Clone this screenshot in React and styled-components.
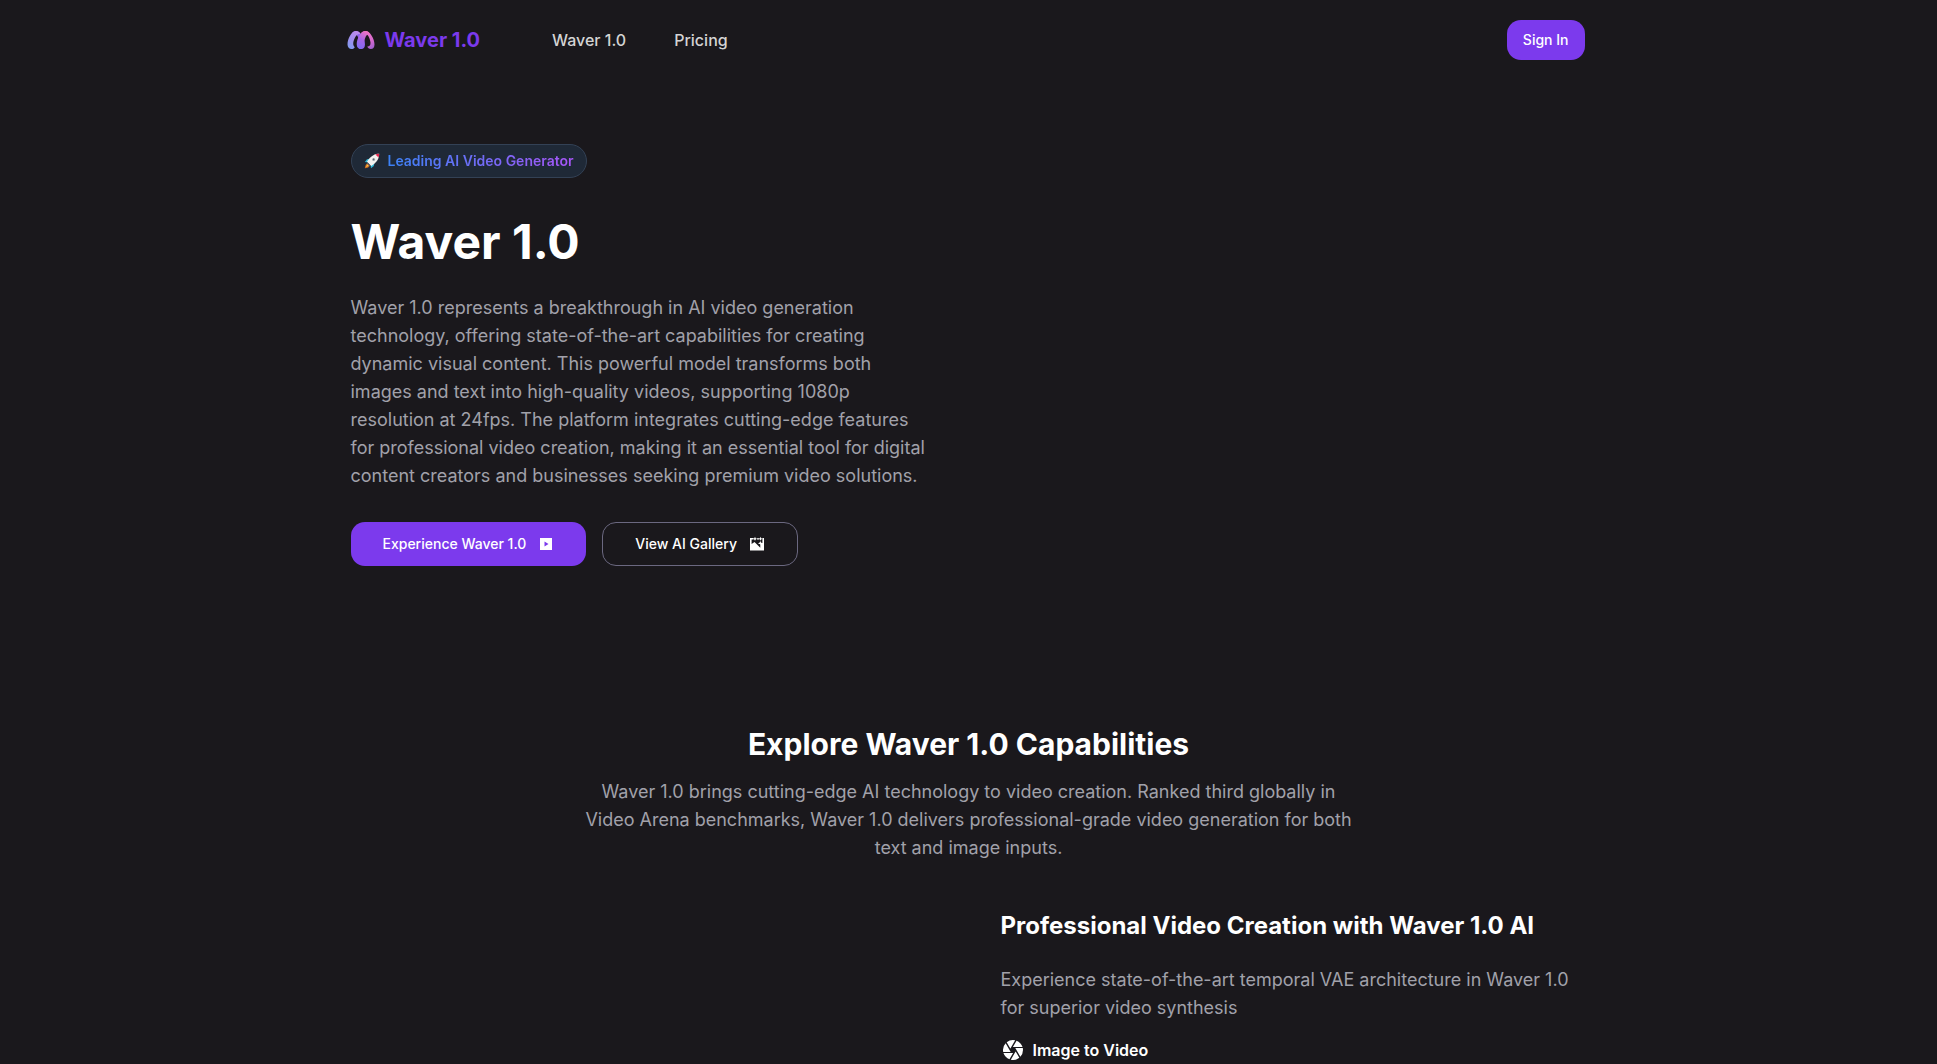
import React from 'react';
import styled, { createGlobalStyle } from 'styled-components';
import { MdCamera } from 'react-icons/md';

const NAV_LINKS = ['Waver 1.0', 'Pricing'];

const LogoIcon = () => (
	<svg width="28" height="20" viewBox="0 0 28 20" fill="none" aria-hidden="true">
		<defs>
			<linearGradient id="logoLeft" x1="1" y1="18" x2="14" y2="2" gradientUnits="userSpaceOnUse">
				<stop stopColor="#7f9cf0" />
				<stop offset="0.5" stopColor="#a48cec" />
				<stop offset="1" stopColor="#c48be8" />
			</linearGradient>
			<linearGradient id="logoMid" x1="10" y1="18" x2="19" y2="2" gradientUnits="userSpaceOnUse">
				<stop stopColor="#7c6cf2" />
				<stop offset="0.5" stopColor="#a464e6" />
				<stop offset="1" stopColor="#ee72c4" />
			</linearGradient>
			<linearGradient id="logoRight" x1="18" y1="1" x2="26" y2="19" gradientUnits="userSpaceOnUse">
				<stop stopColor="#f07ac8" />
				<stop offset="0.6" stopColor="#d468ce" />
				<stop offset="1" stopColor="#9c5fd0" />
			</linearGradient>
		</defs>
		<path
			d="M18.500 1C23 1 27.500 9 27.500 14.500C27.500 17.500 26 19 23.800 19C22 19 20.800 18 20.300 16.500C22.500 16.500 23.800 15 23.500 12.500C23.200 9.500 21.500 5 19 4C17.500 3.500 16.500 3.800 15.500 4.500L14 3C15.200 1.700 16.700 1 18.500 1Z"
			fill="url(#logoRight)"
		/>
		<path
			d="M9 1C13.500 1 18 8.500 18 14.500C18 17.500 16.500 19 14 19C12 19 10.300 17 10 14.500C12.500 13 12 8 10 5.500C9 4.200 8 4 7 5L5 3C6 1.700 7.500 1 9 1Z"
			fill="#8a60ec"
		/>
		<path
			d="M18.500 1C20.500 1 22 2.200 22.800 4.200C20.500 3.600 19.200 5.500 18 8.500C16.800 11.500 17.500 14 16.800 16.300C16.200 18.200 15.200 19 13.800 19C11.400 19 9.700 17.200 9.700 14.200C9.700 8.500 14 1 18.500 1Z"
			fill="url(#logoMid)"
		/>
		<path
			d="M9 1C11 1 12.500 2.200 13.500 4C11 3.500 9.300 5 7.800 8C6.200 11.200 5.300 15 7.800 17.200C7 18.500 5.800 19 4.500 19C2.200 19 .5 17.200 .5 14.500C.5 9 4.500 1 9 1Z"
			fill="url(#logoLeft)"
		/>
	</svg>
);

const RocketIcon = () => (
	<svg width="16" height="16" viewBox="0 0 16 16" aria-hidden="true">
		<path d="M6.500 5.500L3 6.200L.8 9L4.500 9.500Z" fill="#2fb7d6" />
		<path d="M10.500 9.500L9.800 13L7 15.200L6.500 11.500Z" fill="#2fb7d6" />
		<path d="M3.800 10.200C1.800 10.600 1.200 12.500 .8 15.200C3.500 14.900 5.400 14.200 5.800 12.200Z" fill="#c96a26" />
		<path d="M3.800 11.500C2.700 12 2.300 13 2 14C3 13.700 4 13.300 4.500 12.200Z" fill="#ffc83d" />
		<path d="M15.200 .8C11 .8 7 2.500 3 8.800L7.200 13C13.500 9 15.200 5 15.200 .8Z" fill="#f3f1ee" />
		<path d="M15.200 .8C13.700 .8 12.500 1 11.400 1.500L14.500 4.600C15 3.400 15.200 2.200 15.200 .8Z" fill="#e2264d" />
		<path d="M3.200 9.200L6.800 12.800L5.800 13.200L2.800 10.200Z" fill="#565b66" />
		<circle cx="9.600" cy="6.400" r="1.500" fill="#a9b0b5" />
		<circle cx="9.600" cy="6.400" r=".8" fill="#5b666e" />
	</svg>
);

const PlaySquareIcon = () => (
	<svg width="16" height="16" viewBox="0 0 16 16" fill="currentColor" aria-hidden="true">
		<path fillRule="evenodd" d="M2 2H14V14H2ZM6.500 5.400V10.600L10.500 8Z" />
	</svg>
);

const GalleryIcon = () => (
	<svg width="16" height="16" viewBox="0 0 16 16" fill="currentColor" aria-hidden="true">
		<path d="M1 2H4.500V3.500H2.600V8L5.500 6L11.300 11.800V8.600L9.500 7H15V14.600H1Z" />
		<path d="M6 .8L6.700 2.200L8 2.800L6.700 3.400L6 4.800L5.300 3.400L4 2.800L5.300 2.200Z" />
		<path d="M11.500 .8L12.100 2.300L13.500 2.800L12.100 3.400L11.500 4.800L10.900 3.400L9.500 2.800L10.900 2.300Z" />
		<path d="M8 2.200H10V3.500H8Z" />
		<path d="M13.400 2H15V8H13.400Z" />
		<path d="M11.300 5L12 6.500L13.400 7.200V8H9.500V7.200L10.700 6.500Z" />
	</svg>
);

const App = () => {
	return (
		<>
			<GlobalStyle />
			<Header>
				<Logo href="#">
					<LogoIcon />
					Waver 1.0
				</Logo>
				<Nav>
					{NAV_LINKS.map(item => (
						<NavLink key={item} href="#">
							{item}
						</NavLink>
					))}
				</Nav>
				<SignInButton>Sign In</SignInButton>
			</Header>

			<main>
				<Hero>
					<div>
						<Badge>
							<RocketIcon />
							<BadgeText>Leading AI Video Generator</BadgeText>
						</Badge>
						<HeroTitle>Waver 1.0</HeroTitle>
						<Text>
							Waver 1.0 represents a breakthrough in AI video generation
							technology, offering state-of-the-art capabilities for creating
							dynamic visual content. This powerful model transforms both images
							and text into high-quality videos, supporting 1080p resolution at
							24fps. The platform integrates cutting-edge features for
							professional video creation, making it an essential tool for
							digital content creators and businesses seeking premium video
							solutions.
						</Text>
						<Actions>
							<ActionButton $primary>
								Experience Waver 1.0
								<PlaySquareIcon />
							</ActionButton>
							<ActionButton>
								View AI Gallery
								<GalleryIcon />
							</ActionButton>
						</Actions>
					</div>
				</Hero>

				<Capabilities>
					<SectionHead>
						<SectionTitle>Explore Waver 1.0 Capabilities</SectionTitle>
						<Text>
							Waver 1.0 brings cutting-edge AI technology to video creation.
							Ranked third globally in Video Arena benchmarks, Waver 1.0
							delivers professional-grade video generation for both text and
							image inputs.
						</Text>
					</SectionHead>
					<FeatureGrid>
						<div />
						<div>
							<FeatureTitle>
								Professional Video Creation with Waver 1.0 AI
							</FeatureTitle>
							<Text>
								Experience state-of-the-art temporal VAE architecture in Waver
								1.0 for superior video synthesis
							</Text>
							<FeatureItem>
								<MdCamera size={24} />
								Image to Video
							</FeatureItem>
						</div>
					</FeatureGrid>
				</Capabilities>
			</main>
		</>
	);
};

export default App;

const GlobalStyle = createGlobalStyle`
	* {
		box-sizing: border-box;
	}
	body {
		margin: 0;
		background: #1a181c;
		color: #fff;
		font-family: Inter, 'Liberation Sans', sans-serif;
	}
	h1, h2, h3, h4, p {
		margin: 0;
	}
	a {
		text-decoration: none;
	}
	button {
		font-family: inherit;
		cursor: pointer;
	}
`;

const Header = styled.header`
	display: flex;
	align-items: center;
	max-width: 1244px;
	height: 80px;
	margin: 0 auto;
	padding-right: 6px;
`;

const Logo = styled.a`
	display: flex;
	align-items: center;
	gap: 10px;
	color: #7c3aed;
	font-size: 20px;
	font-weight: 700;
	line-height: 28px;
`;

const Nav = styled.nav`
	display: flex;
	gap: 48px;
	margin-left: 72px;
`;

const NavLink = styled.a`
	color: #d4d4d4;
	font-size: 16px;
	font-weight: 500;
	line-height: 24px;
`;

const SignInButton = styled.button`
	height: 40px;
	margin-left: auto;
	padding: 0 16px;
	border: none;
	border-radius: 14px;
	background: #7c3aed;
	color: #fff;
	font-size: 14px;
	font-weight: 500;
	line-height: 20px;
`;

const Hero = styled.section`
	display: grid;
	grid-template-columns: 1fr 1fr;
	gap: 64px;
	max-width: 1236px;
	margin: 0 auto;
	padding: 64px 0 80px;
`;

const Badge = styled.div`
	display: inline-flex;
	align-items: center;
	gap: 8px;
	height: 34px;
	padding: 0 12px;
	border: 1px solid #334155;
	border-radius: 17px;
	background: #1f2937;
`;

const BadgeText = styled.span`
	background: linear-gradient(to right, #3b82f6, #a855f7);
	background-clip: text;
	color: transparent;
	font-size: 14px;
	font-weight: 600;
	line-height: 20px;
`;

const HeroTitle = styled.h1`
	margin: 36px 0 24px;
	font-size: 48px;
	font-weight: 700;
	line-height: 56px;
`;

const Text = styled.p`
	color: #a1a1aa;
	font-size: 18px;
	line-height: 28px;
`;

const Actions = styled.div`
	display: flex;
	gap: 16px;
	margin-top: 32px;
`;

const ActionButton = styled.button`
	display: flex;
	align-items: center;
	gap: 12px;
	height: 44px;
	padding: 0 32px;
	border: ${({ $primary }) => ($primary ? 'none' : '1px solid #6b6880')};
	border-radius: 14px;
	background: ${({ $primary }) => ($primary ? '#7c3aed' : 'transparent')};
	color: #fff;
	font-size: 14px;
	font-weight: 500;
	line-height: 20px;
`;

const Capabilities = styled.section`
	max-width: 1236px;
	margin: 0 auto;
	padding-top: 80px;
`;

const SectionHead = styled.div`
	max-width: 768px;
	margin: 0 auto 48px;
	text-align: center;
`;

const SectionTitle = styled.h2`
	margin-bottom: 16px;
	font-size: 30px;
	font-weight: 700;
	line-height: 36px;
`;

const FeatureGrid = styled.div`
	display: grid;
	grid-template-columns: 1fr 1fr;
	gap: 64px;
`;

const FeatureTitle = styled.h3`
	margin-bottom: 24px;
	font-size: 24px;
	font-weight: 700;
	line-height: 32px;
`;

const FeatureItem = styled.h4`
	display: flex;
	align-items: center;
	gap: 8px;
	margin: 16px 0 0;
	font-size: 16px;
	font-weight: 600;
	line-height: 24px;
`;
